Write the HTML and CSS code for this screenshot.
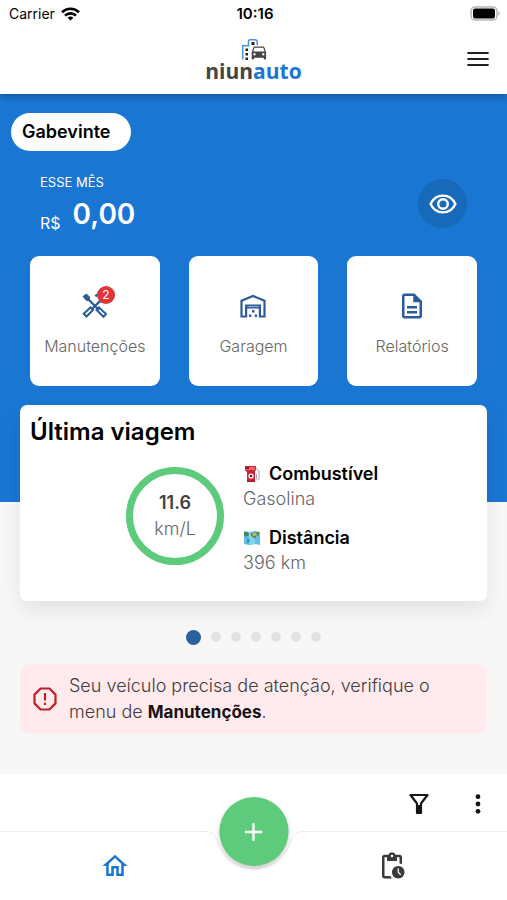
FILE: index.html
```html
<!DOCTYPE html>
<html lang="pt-BR">
<head>
<meta charset="utf-8">
<meta name="viewport" content="width=device-width, initial-scale=1">
<title>niunauto</title>
<link rel="stylesheet" href="styles.css">
</head>
<body>
<div class="app">
  <div class="status">
    <div class="carrier">Carrier
      <svg width="19" height="14" viewBox="0 0 19 14" fill="none" stroke="#000" stroke-width="2.6" aria-hidden="true"><path d="M1 5.2a12.2 12.2 0 0 1 17 0"/><path d="M4 8.6a7.8 7.8 0 0 1 11 0"/><path d="M9.500 13.600 6.600 10.800a4.200 4.200 0 0 1 5.800 0z" fill="#000" stroke="none"/></svg>
    </div>
    <div class="clock">10:16</div>
    <div class="battery">
      <svg width="31" height="16" viewBox="0 0 31 16" aria-hidden="true"><rect x="1" y="1" width="26" height="13" rx="4" fill="#fff" stroke="#b5b5b5" stroke-width="1.500"/><rect x="3" y="2.500" width="22" height="10" rx="2" fill="#000"/><path d="M28.500 5q3 2.500 0 5z" fill="#b5b5b5"/></svg>
    </div>
  </div>

  <header class="header">
    <div class="logo">
      <svg width="26" height="23" viewBox="0 0 26 23" aria-hidden="true">
        <path d="M1.700 21.500V7.700H7.500V3.500Q7.500 1.700 9.300 1.700H14Q16.200 1.700 16.200 3.500V7" fill="none" stroke="#4a90dc" stroke-width="1.500"/>
        <path d="M10.500 4h3v3h-3zM4.500 10.500h2.500v2.500H4.500zM4.500 15h2.500v2.500H4.500zM4.500 19.500h2.500v2.500H4.500z" fill="#222"/>
        <g transform="translate(8.300 4.600) scale(.8)"><path fill="#444" d="M18.920 6.010C18.720 5.420 18.160 5 17.500 5h-11c-.66 0-1.210.42-1.420 1.010L3 12v8c0 .55.45 1 1 1h1c.55 0 1-.45 1-1v-1h12v1c0 .55.45 1 1 1h1c.55 0 1-.45 1-1v-8zM6.500 16a1.500 1.500 0 1 1 0-3 1.500 1.500 0 0 1 0 3zm11 0a1.500 1.500 0 1 1 0-3 1.500 1.500 0 0 1 0 3zM5 11l1.500-4.500h11L19 11z"/></g>
      </svg>
      <div class="brand">niun<span>auto</span></div>
    </div>
    <button class="icon-button menu" aria-label="Menu">
      <svg width="22" height="16" viewBox="0 0 22 16" stroke="#202020" stroke-width="2.200" stroke-linecap="round" aria-hidden="true"><path d="M1.200 2h19.600M1.200 8h19.600M1.200 14h19.600"/></svg>
    </button>
  </header>

  <main class="main">
    <section class="hero">
      <button class="user">Gabevinte</button>
      <div class="balance">
        <div>
          <div class="period">ESSE MÊS</div>
          <div class="amount"><span class="currency">R$</span><span class="value">0,00</span></div>
        </div>
        <button class="eye" aria-label="Ocultar valor">
          <svg width="28" height="20" viewBox="0 0 28 20" fill="none" stroke="#fff" stroke-width="2.400" aria-hidden="true"><path d="M1.600 10C4 4.700 8.700 1.600 14 1.600S24 4.700 26.400 10C24 15.300 19.300 18.400 14 18.400S4 15.300 1.600 10z"/><circle cx="14" cy="10" r="4.800"/></svg>
        </button>
      </div>
      <nav class="tiles" aria-label="Atalhos">
        <a class="tile" href="#manutencoes">
          <span class="tile-icon">
            <svg width="28" height="28" viewBox="0 0 28 28" fill="none" stroke="#2a5c99" stroke-width="2.400" aria-hidden="true">
              <path d="M2 4.500 5.500 2 8.500 5v3l-3 .5z" fill="#2a5c99" stroke-width="1"/>
              <path d="M7 7l11 11M11.500 16.500l8-8"/>
              <path d="M14.500 4.500q1-2 4-2M18 9q5 2 7-3" />
              <path d="M9.500 15.500l2.500 2.500-6.500 6.500-2.800-2.800zM18 15.500l7 6.500-2.500 2.800-7-6.800z" stroke-width="2"/>
            </svg>
            <span class="badge">2</span>
          </span>
          <span>Manutenções</span>
        </a>
        <a class="tile" href="#garagem">
          <span class="tile-icon">
            <svg width="28" height="28" viewBox="0 0 28 28" fill="none" stroke="#2a5c99" stroke-width="2.200" aria-hidden="true"><path d="M2.500 24.500V8.800L14 4l11.500 4.800v15.700h-4.600V13.500H7.100v11z"/><path d="M7 15.800h14" stroke-width="1.500"/><path d="M13 18h2.500v2.500H13zM10 22.500h2.300v2.500H10zM15.800 22.500h2.300v2.500h-2.300z" fill="#2a5c99" stroke="none"/></svg>
          </span>
          <span>Garagem</span>
        </a>
        <a class="tile" href="#relatorios">
          <span class="tile-icon">
            <svg width="30" height="30" viewBox="0 0 24 24" fill="#2a5c99" aria-hidden="true"><path d="M8 16h8v2H8zm0-4h8v2H8zm6-10H6c-1.100 0-2 .9-2 2v16c0 1.100.89 2 1.990 2H18c1.100 0 2-.9 2-2V8l-6-6zm4 18H6V4h7v5h5v11z"/></svg>
          </span>
          <span>Relatórios</span>
        </a>
      </nav>
    </section>

    <section class="trip">
      <h1>Última viagem</h1>
      <div class="trip-body">
        <div class="gauge"><strong>11.6</strong><span>km/L</span></div>
        <dl class="facts">
          <div>
            <dt><svg width="18" height="18" viewBox="0 0 18 18" aria-hidden="true"><path d="M2 1h11v4l-1 1v11H4V7L2 5z" fill="#d01f36"/><path d="M3 2h9v3H3z" fill="#ee6572"/><path d="M3 2h3v2H3z" fill="#8c1b2a"/><circle cx="8" cy="11" r="2.600" fill="#fff"/><circle cx="8" cy="11" r="1.300" fill="#4b1b22"/><path d="M13 3l3 3v8q-1.500 2-2.500 0V9" fill="none" stroke="#aaa5a5"/><path d="M4 16h8v1H4z" fill="#8c1b2a"/></svg>Combustível</dt>
            <dd>Gasolina</dd>
          </div>
          <div>
            <dt><svg width="18" height="18" viewBox="0 0 18 18" aria-hidden="true"><path d="M1 2l5 1 6-1 5 1v13l-5-1-6 1-5-1z" fill="#62c0e8"/><path d="M6 3l6-1v13l-6 1z" fill="#82d3f0"/><path d="M1 3l4 0 1 3-3 2-2-2zM8 4l8-1v3l-3 1-1 3-2-2-2-1z" fill="#4c8752"/><path d="M9 5l4-1 1 2-4 1z" fill="#e3c34c"/><path d="M4 9l3 2-2 4-1-2z" fill="#3d92a4"/></svg>Distância</dt>
            <dd>396 km</dd>
          </div>
        </dl>
      </div>
    </section>

    <div class="dots" aria-hidden="true"><i class="on"></i><i></i><i></i><i></i><i></i><i></i><i></i></div>

    <div class="alert" role="status">
      <svg width="24" height="24" viewBox="0 0 24 24" fill="none" stroke="#bd2025" stroke-width="2.200" stroke-linejoin="round" aria-hidden="true"><path d="M7.600 1.500h8.800l6.100 6.100v8.800l-6.100 6.100H7.600l-6.100-6.100V7.600z"/><path d="M12 6v7.500M12 15.800v2.200"/></svg>
      <p>Seu veículo precisa de atenção, verifique o menu de <strong>Manutenções</strong>.</p>
    </div>
  </main>

  <footer class="footer">
    <div class="tools">
      <button class="icon-button" aria-label="Filtrar"><svg width="20" height="22" viewBox="0 0 20 22" fill="none" stroke="#161616" stroke-width="2.200" stroke-linejoin="round" aria-hidden="true"><path d="M1.500 2h17l-6.500 8.500V20H8v-9.500z"/><path d="M10 12v8" stroke-width="2.400"/></svg></button>
      <button class="icon-button" aria-label="Mais opções"><svg width="6" height="20" viewBox="0 0 6 20" fill="#161616" aria-hidden="true"><circle cx="3" cy="2.700" r="2.400"/><circle cx="3" cy="10" r="2.400"/><circle cx="3" cy="17.300" r="2.400"/></svg></button>
    </div>
    <nav class="tabs" aria-label="Principal">
      <a href="#inicio" aria-label="Início"><svg width="30" height="30" viewBox="0 0 24 24" fill="#1976d2" aria-hidden="true"><path d="M12 5.690l5 4.500V18h-2v-6H9v6H7v-7.810l5-4.500M12 3L2 12h3v8h6v-6h2v6h6v-8h3"/></svg></a>
      <a href="#pendencias" aria-label="Pendências"><svg width="30" height="30" viewBox="0 0 24 24" fill="#3a3a3a" aria-hidden="true"><path d="M17 12c-2.760 0-5 2.240-5 5s2.240 5 5 5 5-2.240 5-5-2.240-5-5-5zm1.650 7.350L16.500 17.200V14h1v2.790l1.850 1.850-.7.710zM18 3h-3.180C14.400 1.840 13.300 1 12 1s-2.400.84-2.820 2H6c-1.100 0-2 .9-2 2v15c0 1.100.9 2 2 2h6.110c-.59-.57-1.070-1.250-1.420-2H6V5h2v3h8V5h2v5.080c.71.1 1.380.31 2 .6V5c0-1.100-.9-2-2-2zm-6 2c-.55 0-1-.45-1-1s.45-1 1-1 1 .45 1 1-.45 1-1 1z"/></svg></a>
      <div class="dock">
        <svg class="notch" width="110" height="46" viewBox="0 0 110 46" aria-hidden="true"><path d="M0 0H110V1.500H103Q95 1.500 92.500 9A38.500 38.500 0 0 1 17.500 9Q15 1.500 7 1.500H0z" fill="#fff"/><path d="M0 1.500H7Q15 1.500 17.500 9A38.500 38.500 0 0 0 92.500 9Q95 1.500 103 1.500H110" fill="none" stroke="#ececec"/></svg>
        <button class="add" aria-label="Adicionar"><svg width="18" height="18" viewBox="0 0 18 18" stroke="#fff" stroke-width="2.400" stroke-linecap="round" aria-hidden="true"><path d="M9 1.200v15.600M1.200 9h15.600"/></svg></button>
      </div>
    </nav>
  </footer>
</div>
</body>
</html>
```
FILE: styles.css
```css
* {
  box-sizing: border-box;
}

body {
  margin: 0;
  background: #f7f7f7;
  color: #000;
  font-family: Inter, "Liberation Sans", sans-serif;
  font-size: 16px;
}

button {
  padding: 0;
  border: 0;
  background: none;
  font: inherit;
  color: inherit;
}

a {
  color: inherit;
  text-decoration: none;
}

svg {
  display: block;
  flex: none;
}

.app {
  display: flex;
  flex-direction: column;
  min-height: 100vh;
}

.status {
  position: relative;
  z-index: 1;
  display: grid;
  grid-template-columns: 1fr auto 1fr;
  align-items: center;
  height: 27px;
  padding: 0 6px 0 9px;
  background: #fff;
  font-size: 14px;
}

.carrier {
  display: flex;
  align-items: center;
  gap: 6px;
}

.clock {
  font-size: 15px;
  font-weight: 600;
}

.battery {
  justify-self: end;
}

.header {
  position: relative;
  display: grid;
  grid-template-columns: 1fr auto 1fr;
  align-items: center;
  height: 67px;
  padding: 0 18px 3px;
  background: #fff;
  box-shadow: 0 2px 8px rgba(0, 0, 0, 0.3);
}

.logo {
  grid-column: 2;
  display: flex;
  flex-direction: column;
  align-items: center;
}

.brand {
  font: 700 21px/20px "Open Sans", sans-serif;
  color: #444;
}

.brand span {
  color: #1976d2;
}

.menu {
  justify-self: end;
}

.hero {
  padding: 19px 30px 116px;
  background: #1976d2;
}

.user {
  height: 38px;
  margin-left: -19px;
  padding: 0 21px 0 11px;
  border-radius: 19px;
  background: #fff;
  font-size: 18px;
  font-weight: 600;
  line-height: 38px;
}

.balance {
  display: flex;
  align-items: center;
  justify-content: space-between;
  height: 105px;
  padding: 0 10px;
  color: #fff;
}

.period {
  font-size: 13px;
  line-height: 20px;
}

.amount {
  display: flex;
  align-items: flex-end;
  gap: 12px;
  line-height: 44px;
}

.currency {
  line-height: 26px;
}

.value {
  font-size: 28px;
  font-weight: 600;
}

.eye {
  display: grid;
  place-items: center;
  width: 49px;
  height: 49px;
  border-radius: 50%;
  background: #1769ba;
}

.tiles {
  display: grid;
  grid-template-columns: repeat(3, 1fr);
  gap: 29px;
}

.tile {
  display: flex;
  flex-direction: column;
  align-items: center;
  justify-content: center;
  gap: 15px;
  height: 130px;
  padding-top: 5px;
  border-radius: 9px;
  background: #fff;
  color: #666;
  font-size: 16px;
  font-weight: 300;
  line-height: 20px;
}

.tile-icon {
  position: relative;
  display: grid;
  place-items: center;
  width: 30px;
  height: 30px;
}

.badge {
  position: absolute;
  top: -5px;
  right: -5px;
  width: 18px;
  height: 18px;
  border-radius: 50%;
  background: #df343b;
  color: #fff;
  font-size: 12px;
  font-weight: 400;
  line-height: 18px;
  text-align: center;
}

.trip {
  position: relative;
  height: 196px;
  margin: -97px 20px 0;
  padding: 11px 10px;
  border-radius: 7px;
  background: #fff;
  box-shadow: 0 10px 20px rgba(0, 0, 0, 0.08);
}

.trip h1 {
  margin: 0;
  font-size: 24px;
  font-weight: 600;
  line-height: 32px;
}

.trip-body {
  display: grid;
  grid-template-columns: 194px 1fr;
  gap: 19px;
  margin-top: 13px;
}

.gauge {
  display: flex;
  flex-direction: column;
  align-items: center;
  justify-content: center;
  justify-self: end;
  width: 98px;
  height: 98px;
  margin-top: 6px;
  border: 7px solid #5dcb7b;
  border-radius: 50%;
  color: #666;
  font-size: 18px;
  font-weight: 300;
  line-height: 26px;
}

.gauge strong {
  color: #424242;
  font-weight: 600;
}

.facts {
  display: grid;
  gap: 14px;
  margin: 0;
  font-size: 18px;
  line-height: 25px;
}

.facts dt {
  display: flex;
  align-items: center;
  gap: 8px;
  font-weight: 600;
}

.facts dd {
  margin: 0;
  color: #666;
  font-weight: 300;
}

.dots {
  display: flex;
  align-items: center;
  justify-content: center;
  gap: 10px;
  height: 63px;
  padding-top: 9px;
}

.dots i {
  width: 10px;
  height: 10px;
  border-radius: 50%;
  background: #e2e2e2;
}

.dots .on {
  width: 15px;
  height: 15px;
  background: #2a629d;
}

.alert {
  display: flex;
  align-items: center;
  gap: 12px;
  margin: 0 20px;
  padding: 9px 13px;
  border-radius: 9px;
  background: #ffebee;
  color: #443a3c;
  font-size: 18px;
  font-weight: 300;
  line-height: 26px;
}

.alert p {
  margin: 0;
}

.alert strong {
  color: #171315;
  font-size: 17px;
  font-weight: 700;
}

.footer {
  margin-top: auto;
  background: #fff;
}

.tools {
  display: flex;
  align-items: center;
  justify-content: flex-end;
  gap: 46px;
  height: 57px;
  padding: 2px 26px 0;
}

.tabs {
  position: relative;
  display: grid;
  grid-template-columns: 1fr 1fr;
  column-gap: 48px;
  align-items: center;
  justify-items: center;
  height: 69px;
  border-top: 1px solid #f0f0f0;
}

.dock {
  position: absolute;
  top: -2px;
  left: 50%;
  width: 110px;
  transform: translateX(-50%);
}

.add {
  position: absolute;
  top: -33px;
  left: 50%;
  display: grid;
  place-items: center;
  width: 69px;
  height: 69px;
  border-radius: 50%;
  background: #5dcb7b;
  box-shadow: 0 2px 4px rgba(0, 0, 0, 0.25);
  transform: translateX(-50%);
}
```
